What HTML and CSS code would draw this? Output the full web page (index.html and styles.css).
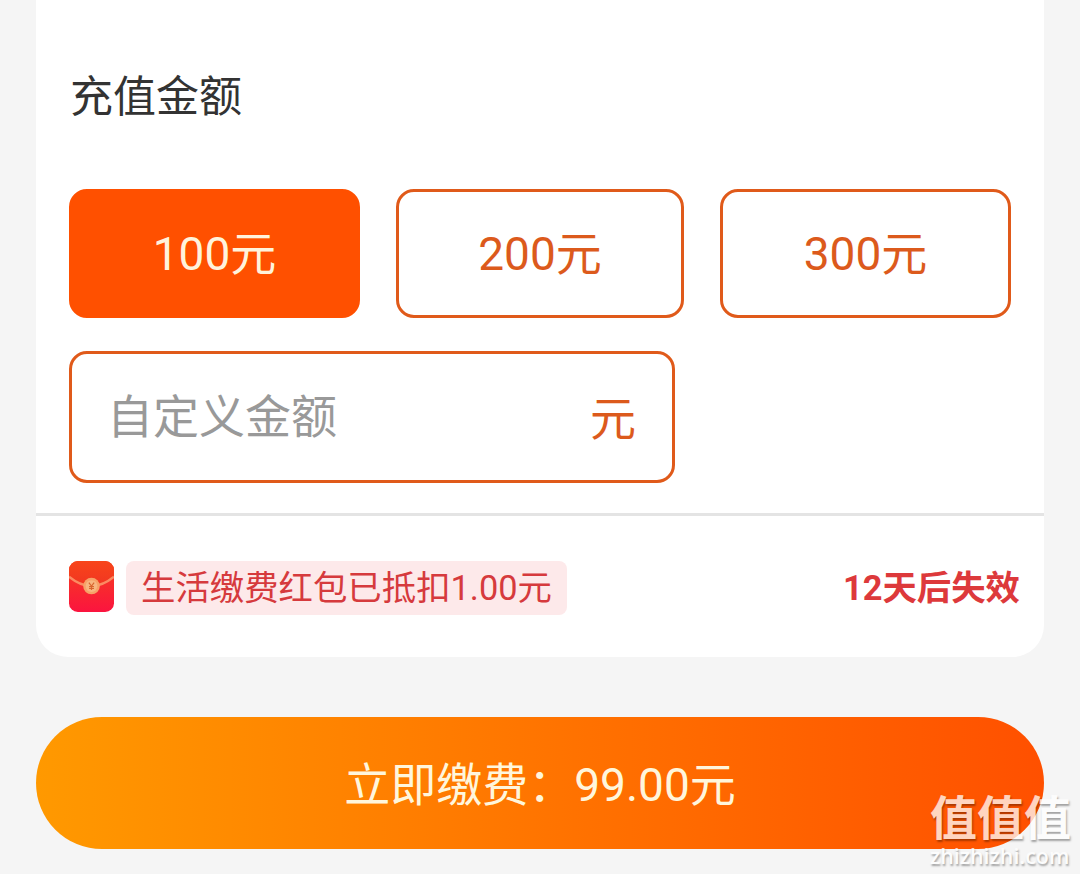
FILE: index.html
```html
<!DOCTYPE html>
<html lang="zh-CN">
<head>
    <meta charset="UTF-8">
    <meta name="viewport" content="width=device-width, initial-scale=1.0">
    <title>生活缴费</title>
    <link rel="stylesheet" href="styles.css">
</head>
<body>
    <div class="page">
        <div class="card">
            <div class="recharge">
                <h2 class="title">充值金额</h2>
                <div class="amounts">
                    <button class="amount active">100元</button>
                    <button class="amount">200元</button>
                    <button class="amount">300元</button>
                    <label class="custom">
                        <input class="custom-input" type="text" placeholder="自定义金额">
                        <span class="unit">元</span>
                    </label>
                </div>
            </div>

            <div class="coupon">
                <svg class="packet" width="45" height="51" viewBox="0 0 46 52">
                    <defs>
                        <linearGradient id="packetBody" x1="0" y1="0" x2="0" y2="1">
                            <stop offset="0" stop-color="#f5401c"/>
                            <stop offset="1" stop-color="#fb143f"/>
                        </linearGradient>
                        <linearGradient id="packetFlap" x1="0" y1="0" x2="0" y2="1">
                            <stop offset="0" stop-color="#f8451a"/>
                            <stop offset="1" stop-color="#f13522"/>
                        </linearGradient>
                    </defs>
                    <rect width="46" height="52" rx="9" fill="url(#packetBody)"/>
                    <path d="M0 16V9a9 9 0 0 1 9-9h28a9 9 0 0 1 9 9v7Q23 35 0 16z" fill="url(#packetFlap)"/>
                    <path d="M0 16Q23 35 46 16" fill="none" stroke="#fb8a62" stroke-width="2.4"/>
                    <circle cx="23" cy="25.5" r="8.5" fill="#f6a268"/>
                    <circle cx="23" cy="25.5" r="6" fill="#f8b680"/>
                    <path d="M20.3 22l2.7 3.5 2.7-3.5M23 25.5v4M20.5 26h5M20.5 28h5" fill="none" stroke="#d9652f" stroke-width="1.2"/>
                </svg>
                <span class="tag">生活缴费红包已抵扣1.00元</span>
                <span class="expire">12天后失效</span>
            </div>
        </div>

        <button class="pay">立即缴费：99.00元</button>

        <div class="watermark">
            <div class="watermark-name">值值值</div>
            <div class="watermark-url">zhizhizhi.com</div>
        </div>
    </div>
</body>
</html>
```
FILE: styles.css
```css
* {
    box-sizing: border-box;
}
body {
    margin: 0;
    background: #f5f5f5;
    font-family: Roboto, 'Noto Sans CJK SC', sans-serif;
}
button,
input {
    font-family: inherit;
    padding: 0;
    border: none;
}
.page {
    position: relative;
    height: 874px;
    padding: 0 36px;
    overflow: hidden;
}
.card {
    height: 657px;
    background: #fff;
    border-radius: 0 0 32px 32px;
}
.recharge {
    height: 516px;
    padding: 65px 33px 0;
    border-bottom: 3px solid #e4e4e4;
}
.title {
    margin: 0 0 60px;
    padding-left: 1px;
    font-size: 43px;
    font-weight: 400;
    line-height: 64px;
    color: #333;
}
.amounts {
    display: grid;
    grid-template-columns: 291px 288px 291px;
    grid-template-rows: 129px 132px;
    gap: 33px 36px;
}
.amount {
    padding-bottom: 8px;
    border: 3px solid #e05a1a;
    border-radius: 18px;
    background: #fff;
    color: #dc5a1c;
    font-size: 46px;
}
.amount.active {
    background: #ff5000;
    border-color: #ff5000;
    color: #fff3dc;
}
.custom {
    grid-column: 1 / 3;
    display: flex;
    align-items: center;
    width: 606px;
    padding: 0 36px 4px 35px;
    border: 3px solid #e05a1a;
    border-radius: 18px;
    font-size: 46px;
}
.custom-input {
    flex: 1;
    min-width: 0;
    height: 70px;
    margin-top: 3px;
    background: none;
    font-size: 46px;
    outline: none;
}
.custom-input::placeholder {
    color: #999;
}
.unit {
    color: #dc5a1c;
}
.coupon {
    display: flex;
    align-items: center;
    height: 141px;
    padding: 2px 24px 0 33px;
    font-size: 34.4px;
}
.packet {
    margin: 0 12px 2px 0;
}
.tag {
    height: 54px;
    padding: 0 15px;
    line-height: 54px;
    background: #fde9ea;
    border-radius: 8px;
    color: #d63a3d;
}
.expire {
    margin-left: auto;
    padding-bottom: 5px;
    font-weight: 700;
    color: #dd393b;
}
.pay {
    display: block;
    width: 100%;
    height: 132px;
    margin-top: 60px;
    padding-bottom: 4px;
    border-radius: 66px;
    background: linear-gradient(90deg, #ff9900, #ff5000);
    color: #fff6dc;
    font-size: 46px;
}
.watermark {
    position: absolute;
    right: 9px;
    bottom: 5px;
    width: 141px;
    color: #fff;
    text-shadow: 1px 2px 2px rgba(0, 0, 0, 0.45);
    white-space: nowrap;
    opacity: 0.75;
}
.watermark-name {
    font-family: 'Noto Sans CJK SC', sans-serif;
    font-size: 47px;
    font-weight: 700;
    line-height: 56px;
}
.watermark-url {
    font-family: 'Open Sans', sans-serif;
    font-size: 21.4px;
    font-weight: 600;
    line-height: 26px;
}
```
